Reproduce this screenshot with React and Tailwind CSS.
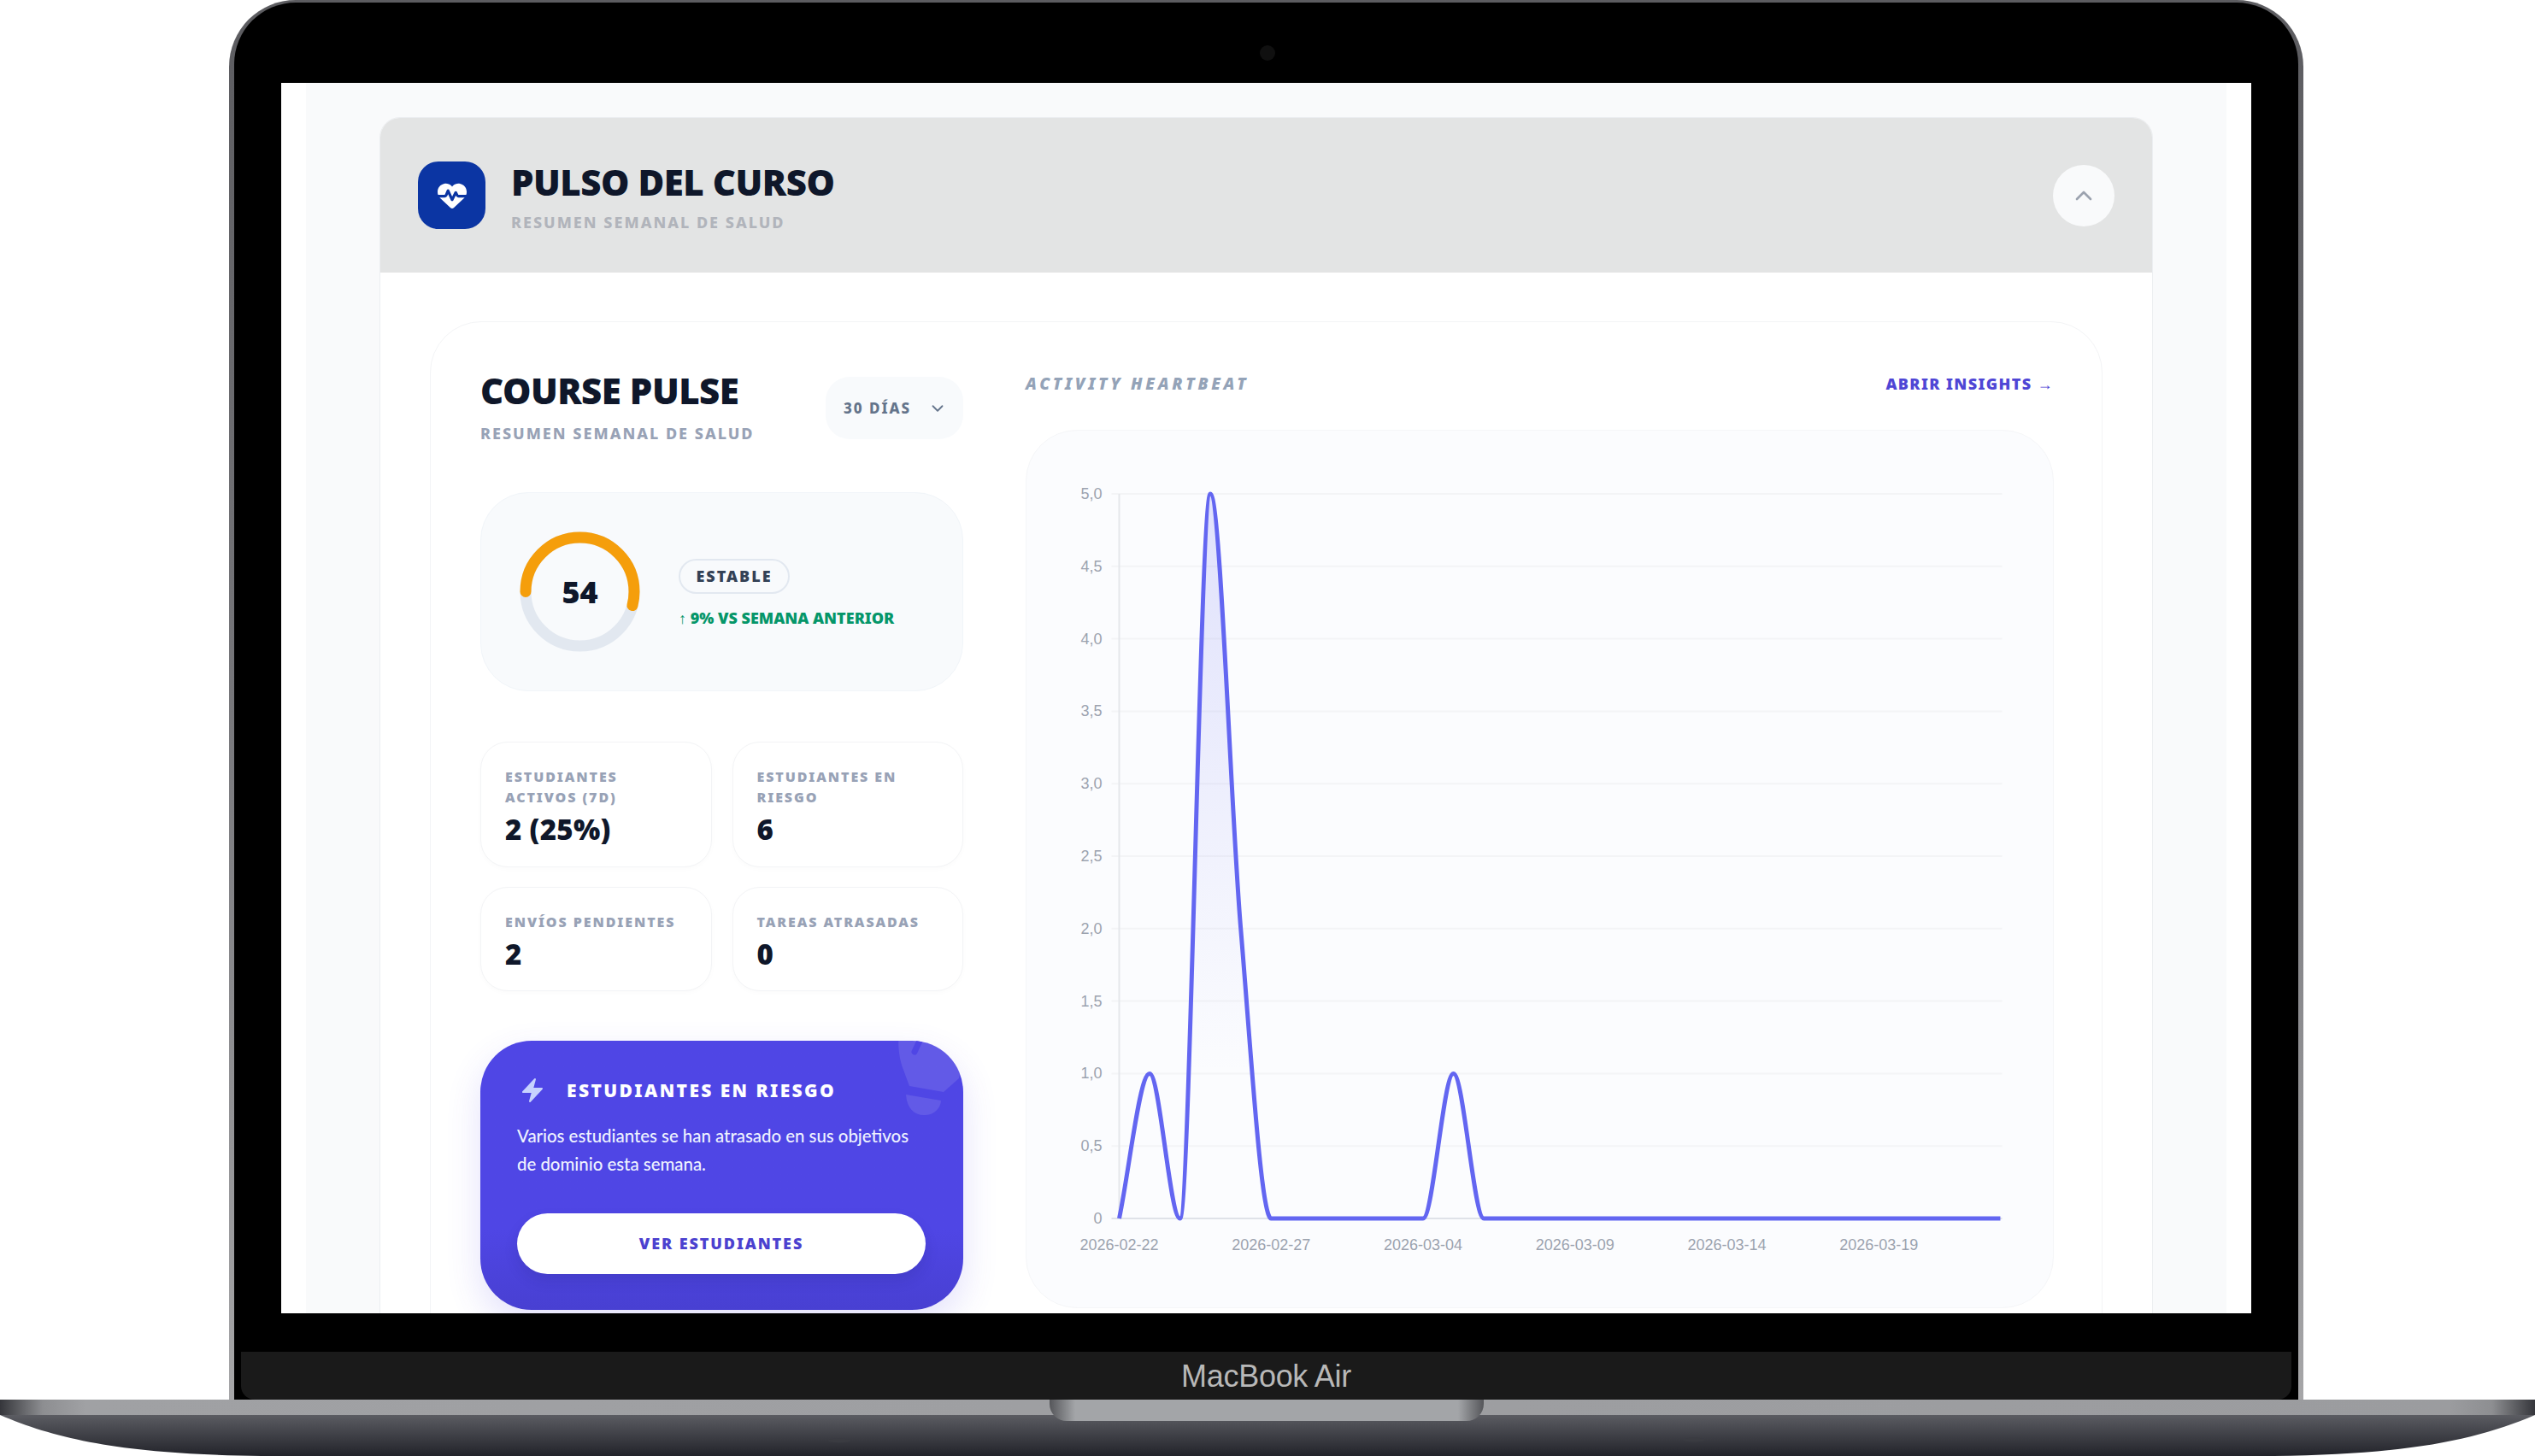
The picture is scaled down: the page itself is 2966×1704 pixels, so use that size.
import { ChevronDown, ChevronUp } from 'lucide-react';
import { FaHeartPulse } from 'react-icons/fa6';
import { HiBolt } from 'react-icons/hi2';

const valores = [0, 1, 0, 5, 2, 0, 0, 0, 0, 0, 0, 1, 0, 0, 0, 0, 0, 0, 0, 0, 0, 0, 0, 0, 0, 0, 0, 0, 0, 0];
const ticksY = ['0', '0,5', '1,0', '1,5', '2,0', '2,5', '3,0', '3,5', '4,0', '4,5', '5,0'];
const ticksX = ['2026-02-22', '2026-02-27', '2026-03-04', '2026-03-09', '2026-03-14', '2026-03-19'];

const X = (i) => 108 + i * 35.55;
const Y = (v) => 922 - v * 169.6;

// misma curva que d3 monotoneX
const curvaMonotona = (ys) => {
    const pend = ys.slice(1).map((y, i) => y - ys[i]);
    const tang = ys.map((_, i) => {
        if (i === 0) return pend[0];
        if (i === ys.length - 1) return pend[i - 1];
        const a = pend[i - 1];
        const b = pend[i];
        return (Math.sign(a) + Math.sign(b)) * Math.min(Math.abs(a), Math.abs(b), Math.abs(a + b) / 4);
    });
    let d = `M${X(0)} ${Y(ys[0])}`;
    for (let i = 0; i < ys.length - 1; i++) {
        const dx = 35.55 / 3;
        d += ` C${X(i) + dx} ${Y(ys[i] + tang[i] / 3)} ${X(i + 1) - dx} ${Y(ys[i + 1] - tang[i + 1] / 3)} ${X(i + 1)} ${Y(ys[i + 1])}`;
    }
    return d;
};

const linea = curvaMonotona(valores);
const area = `${linea} L${X(29)} ${Y(0)} L${X(0)} ${Y(0)} Z`;

function Grafico() {
    return (
        <svg viewBox="0 0 1200 1026" className="block w-full h-full">
            <defs>
                <linearGradient id="relleno" x1="0" y1="0" x2="0" y2="1">
                    <stop offset="0" stopColor="#6366f1" stopOpacity="0.18" />
                    <stop offset="0.8" stopColor="#6366f1" stopOpacity="0" />
                </linearGradient>
            </defs>
            {ticksY.map((t, i) => {
                const y = Y(i / 2);
                return (
                    <g key={t}>
                        <line x1="99" x2="1141" y1={y} y2={y} stroke={i === 0 ? '#dfe2e8' : '#f3f4f6'} strokeWidth="2" />
                        <text x="88" y={y} textAnchor="end" dominantBaseline="central" fontSize="18" fill="#9ca3af" fontFamily="'Liberation Sans', sans-serif">{t}</text>
                    </g>
                );
            })}
            <line x1="108" x2="108" y1={Y(5)} y2={Y(0)} stroke="#e5e7eb" strokeWidth="2" />
            {ticksX.map((t, i) => (
                <text key={t} x={X(i * 5)} y="953" textAnchor="middle" dominantBaseline="central" fontSize="18" fill="#9ca3af" fontFamily="'Liberation Sans', sans-serif">{t}</text>
            ))}
            <path d={area} fill="url(#relleno)" />
            <path d={linea} fill="none" stroke="#6366f1" strokeWidth="5" strokeLinejoin="round" />
        </svg>
    );
}

function AnilloPuntaje() {
    const r = 63.5;
    const c = 2 * Math.PI * r;
    return (
        <div className="relative w-[141px] h-[141px] shrink-0">
            <svg viewBox="0 0 141 141" className="block w-full h-full rotate-180">
                <circle cx="70.5" cy="70.5" r={r} fill="none" stroke="#e2e8f0" strokeWidth="13" />
                <circle cx="70.5" cy="70.5" r={r} fill="none" stroke="#f59e0b" strokeWidth="13" strokeLinecap="round" strokeDasharray={`${c * 0.54} ${c}`} />
            </svg>
            <span className="absolute inset-0 flex items-center justify-center text-[36px] font-black text-[#0f172a]">54</span>
        </div>
    );
}

function Metrica({ etiqueta, valor, alto }) {
    return (
        <div className={`${alto} rounded-[32px] border border-[#f3f4f6] bg-white px-[28px] pt-[28px] shadow-[0_2px_6px_rgba(15,23,42,0.02)]`}>
            <p className="text-[16px] leading-[24px] font-black tracking-[1.9px] text-[#98a2b6] uppercase">{etiqueta}</p>
            <p className="mt-[4px] text-[33px] leading-[44px] font-black tracking-[0.3px] text-[#0f172a]">{valor}</p>
        </div>
    );
}

function TarjetaRiesgo() {
    return (
        <div className="relative mt-[58px] h-[315px] overflow-hidden rounded-[60px] bg-linear-to-b from-[#4f46e5] via-[#4f46e5] via-70% to-[#4840d2] px-[43px] pt-[40px] shadow-[0_16px_40px_rgba(79,70,229,0.16)]">
            <svg viewBox="0 0 120 110" className="absolute right-[-14px] top-[-8px] w-[120px] h-[110px]">
                <path d="M31 0C29 12 31 30 36 42L43 61L83 68L101 52L110 0Z" fill="#ffffff" fillOpacity="0.11" />
                <path d="M39 71L80 78C80 86 72 95 62 95C50 96 40 88 39 71Z" fill="#ffffff" fillOpacity="0.11" />
                <path d="M49 21L55 8" stroke="#4f46e5" strokeWidth="7" strokeLinecap="round" />
            </svg>
            <div className="flex items-center gap-[24px]">
                <HiBolt className="w-[32px] h-[36px] text-[#c7d2fe] shrink-0 ml-[2px]" />
                <h3 className="text-[21px] leading-[32px] font-black tracking-[2.4px] text-white uppercase">Estudiantes en riesgo</h3>
            </div>
            <p className="mt-[19px] w-[480px] font-['Lato',sans-serif] text-[20.4px] leading-[33px] font-medium text-[#eef2ff]">
                Varios estudiantes se han atrasado en sus objetivos de dominio esta semana.
            </p>
            <button className="mt-[41px] flex h-[71px] w-[478px] items-center justify-center rounded-full bg-white text-[18px] font-black tracking-[1.9px] text-[#4b41cf] uppercase shadow-[0_8px_16px_rgba(30,27,100,0.14)]">
                Ver estudiantes
            </button>
        </div>
    );
}

function PanelIzquierdo() {
    return (
        <div className="w-[565px] shrink-0">
            <div className="flex items-start justify-between">
                <div>
                    <h2 className="text-[42px] leading-[42px] mt-[-5px] font-black tracking-[-0.5px] text-[#0f172a] uppercase">Course Pulse</h2>
                    <p className="mt-[17px] text-[18px] leading-[24px] font-extrabold tracking-[2px] text-[#98a2b6] uppercase">Resumen semanal de salud</p>
                </div>
                <div className="flex h-[73px] w-[161px] items-center rounded-[28px] bg-[#f8fafc] pl-[21px]">
                    <span className="text-[17px] font-extrabold tracking-[2px] text-[#64748b] uppercase">30 días</span>
                    <ChevronDown size={22} strokeWidth={2} className="ml-[20px] text-[#64748b]" />
                </div>
            </div>

            <div className="mt-[57px] flex h-[233px] items-start rounded-[56px] border border-[#f1f5f9] bg-[#f8fafc] pt-[45px] pl-[45px]">
                <AnilloPuntaje />
                <div className="ml-[45px] mt-[32px]">
                    <span className="inline-flex h-[41px] w-[130px] items-center justify-center rounded-full border-2 border-[#e2e8f0] bg-[#f8fafc] text-[18px] font-black tracking-[2px] text-[#334155] uppercase">Estable</span>
                    <p className="mt-[15px] text-[18px] leading-[26px] font-black text-[#059669] uppercase">↑ 9% vs semana anterior</p>
                </div>
            </div>

            <div className="mt-[59px] grid grid-cols-2 gap-x-[24px] gap-y-[23px]">
                <Metrica alto="h-[147px]" etiqueta="Estudiantes activos (7d)" valor="2 (25%)" />
                <Metrica alto="h-[147px]" etiqueta="Estudiantes en riesgo" valor="6" />
                <Metrica alto="h-[122px]" etiqueta="Envíos pendientes" valor="2" />
                <Metrica alto="h-[122px]" etiqueta="Tareas atrasadas" valor="0" />
            </div>

            <TarjetaRiesgo />
        </div>
    );
}

function PanelDerecho() {
    return (
        <div className="min-w-0 flex-1">
            <div className="flex items-center justify-between h-[28px] mt-[-6px]">
                <span className="text-[19px] font-black italic tracking-[3.7px] text-[#94a3b8] uppercase">Activity heartbeat</span>
                <span className="text-[18px] font-black tracking-[1.4px] text-[#4f46d5] uppercase">Abrir insights →</span>
            </div>
            <div className="mt-[40px] h-[1028px] rounded-[60px] border border-[#f5f6f8] bg-[#fbfcfe]">
                <Grafico />
            </div>
        </div>
    );
}

function PulsoCurso() {
    return (
        <div className="h-[1500px] rounded-t-[24px] border border-[#eceef1] bg-white overflow-hidden">
            <div className="flex h-[181px] items-center justify-between bg-[#e3e4e4] px-[44px]">
                <div className="flex items-center gap-[30px]">
                    <div className="flex h-[79px] w-[79px] items-center justify-center rounded-[24px] bg-[#0b35a3]">
                        <FaHeartPulse className="w-[34px] h-[34px] text-white" />
                    </div>
                    <div className="pt-[4px]">
                        <h1 className="text-[42px] leading-[46px] font-black tracking-[-0.5px] text-[#0f172a] uppercase">Pulso del curso</h1>
                        <p className="mt-[12px] text-[18px] leading-[24px] font-extrabold tracking-[2px] text-[#b1b4bb] uppercase">Resumen semanal de salud</p>
                    </div>
                </div>
                <button className="flex h-[72px] w-[72px] items-center justify-center rounded-full bg-[#f9fafb]">
                    <ChevronUp size={32} strokeWidth={2} className="text-[#9ca3af]" />
                </button>
            </div>
            <div className="px-[58px] pt-[57px]">
                <div className="flex gap-[73px] rounded-[60px] border border-[#f3f4f6] bg-white pt-[64px] pl-[58px] pr-[56px] h-[1400px]">
                    <PanelIzquierdo />
                    <PanelDerecho />
                </div>
            </div>
        </div>
    );
}

function Base() {
    return (
        <div className="relative w-full">
            <div className="h-[18px] bg-[linear-gradient(to_right,#35363b_0px,#8d8e91_50px,#a0a1a4_100px,#9b9c9f_2866px,#8d8e91_2916px,#35363b_2966px)]" />
            <div className="absolute left-[1228px] top-0 h-[25px] w-[508px] rounded-b-[20px] bg-[linear-gradient(to_right,#55565a_0px,#a3a5a8_30px,#a3a5a8_478px,#55565a_508px)]" />
            <svg viewBox="0 0 2966 48" className="block w-[2966px] h-[48px]">
                <defs>
                    <linearGradient id="cuerpo" x1="0" y1="0" x2="0" y2="1">
                        <stop offset="0" stopColor="#5b5c62" />
                        <stop offset="1" stopColor="#22232a" />
                    </linearGradient>
                </defs>
                <path d="M0 0C70 30 150 46 306 48L2660 48C2816 46 2896 30 2966 0Z" fill="url(#cuerpo)" />
                <ellipse cx="982" cy="30" rx="13" ry="2.5" fill="#3a3b41" />
                <ellipse cx="1982" cy="29" rx="13" ry="2.5" fill="#3a3b41" />
            </svg>
        </div>
    );
}

export default function App() {
    return (
        <div className="relative flex h-[1704px] w-[2966px] flex-col overflow-hidden bg-white font-['Noto_Sans',sans-serif]">
            <div className="ml-[268px] w-[2427px] rounded-t-[78px] bg-linear-to-b from-[#5c5c60] via-[#77777b] to-[#a6a6a8] px-[6px] pt-[3px]">
                <div className="relative flex flex-col rounded-t-[72px] bg-black">
                    <div className="absolute left-[1200px] top-[50px] h-[18px] w-[18px] rounded-full bg-[#101010]" />
                    <div className="px-[55px] pt-[94px] pb-[45px]">
                        <div className="h-[1440px] overflow-hidden bg-white px-[29px]">
                            <div className="h-full overflow-hidden bg-[#f9fafb] px-[86px] pt-[40px]">
                                <PulsoCurso />
                            </div>
                        </div>
                    </div>
                    <div className="mx-[8px] flex h-[56px] items-center justify-center rounded-b-[16px] bg-[#1a1a1a] pt-[2px] font-['Liberation_Sans',sans-serif] text-[36px] tracking-[-0.3px] text-[#b8b8b8]">
                        MacBook Air
                    </div>
                </div>
            </div>
            <Base />
        </div>
    );
}
